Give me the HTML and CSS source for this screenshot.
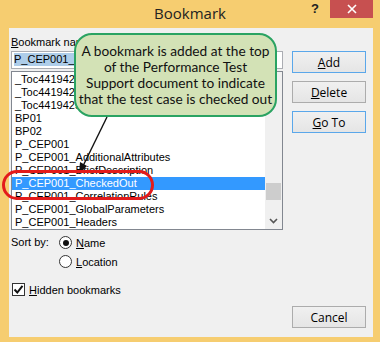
FILE: index.html
```html
<!DOCTYPE html>
<html lang="en">
<head>
  <meta charset="UTF-8">
  <title>Bookmark</title>
  <link rel="stylesheet" href="styles.css">
</head>
<body>
  <div class="window">
    <div class="titlebar">
      <span></span>
      <div class="title">Bookmark</div>
      <div class="controls">
        <span class="help">?</span>
        <span class="close">
          <svg width="10" height="10" viewBox="0 0 10 10"><path d="M1 1 L9 9 M9 1 L1 9" stroke="#fff" stroke-width="1.6"/></svg>
        </span>
      </div>
    </div>

    <div class="client">
      <div class="main">
        <label class="field-label"><u>B</u>ookmark name:</label>
        <div class="name-input"><span class="sel">P_CEP001_CheckedOut</span></div>
        <div class="list">
          <ul class="items">
            <li>_Toc441942547</li>
            <li>_Toc441942548</li>
            <li>_Toc441942549</li>
            <li>BP01</li>
            <li>BP02</li>
            <li>P_CEP001</li>
            <li>P_CEP001_AdditionalAttributes</li>
            <li>P_CEP001_BriefDescription</li>
            <li class="selected">P_CEP001_CheckedOut</li>
            <li>P_CEP001_CorrelationRules</li>
            <li>P_CEP001_GlobalParameters</li>
            <li>P_CEP001_Headers</li>
          </ul>
          <div class="scrollbar">
            <div class="thumb"></div>
            <div class="down">
              <svg width="9" height="6" viewBox="0 0 9 6"><path d="M1 1 L4.5 4.5 L8 1" fill="none" stroke="#555" stroke-width="1.6"/></svg>
            </div>
          </div>
        </div>

        <div class="sort">
          <span class="sort-label">Sort by:</span>
          <div class="radios">
            <div class="radio"><span class="circle checked"></span><u>N</u>ame</div>
            <div class="radio"><span class="circle"></span><u>L</u>ocation</div>
          </div>
        </div>

        <div class="check">
          <span class="box">
            <svg width="11" height="11" viewBox="0 0 11 11"><path d="M1.5 5.5 L4.3 8.5 L9.5 1.8" fill="none" stroke="#111" stroke-width="2"/></svg>
          </span>
          <u>H</u>idden bookmarks
        </div>
      </div>

      <div class="buttons">
        <button class="btn default"><u>A</u>dd</button>
        <button class="btn"><u>D</u>elete</button>
        <button class="btn default"><u>G</u>o To</button>
        <button class="btn cancel">Cancel</button>
      </div>
    </div>

    <!-- annotation layered over the dialog -->
    <div class="callout">A bookmark is added at the top<br>of the Performance Test<br>Support document to indicate<br>that the test case is checked out</div>
    <svg class="pointer" width="380" height="342" viewBox="0 0 380 342">
      <line x1="107" y1="117" x2="83" y2="166" stroke="#111" stroke-width="1.4"/>
      <polygon points="79,174 80,162 87,166" fill="#111"/>
    </svg>
    <div class="ring"></div>
  </div>
</body>
</html>
```

FILE: styles.css
```css
body {
  margin: 0;
}
.window {
  position: relative;
  width: 380px;
  height: 342px;
  background-color: #f6cd70;
  display: flex;
  flex-direction: column;
  font-family: "Liberation Sans", Arial, sans-serif;
  font-size: 11px;
  color: #000;
}
.titlebar {
  height: 28px;
  display: grid;
  grid-template-columns: 1fr auto 1fr;
}
.title {
  font-family: "Open Sans", sans-serif;
  font-size: 15px;
  line-height: 26px;
  color: #222;
}
.controls {
  justify-self: end;
  display: flex;
  align-items: flex-start;
}
.help {
  font-weight: bold;
  font-size: 13px;
  line-height: 15px;
  margin: 1px 11px 0 0;
  color: #222;
}
.close {
  width: 43px;
  height: 18px;
  margin-right: 7px;
  background-color: #c75050;
  display: flex;
  align-items: center;
  justify-content: center;
}
.client {
  flex: 1;
  margin: 0 7px 5px 9px;
  padding: 8px 0 9px 2px;
  background-color: #f0f0f0;
  display: grid;
  grid-template-columns: 272px 74px;
  column-gap: 9px;
}
.main {
  display: flex;
  flex-direction: column;
}
.field-label {
  line-height: 13px;
  margin-bottom: 2px;
}
.name-input {
  box-sizing: border-box;
  height: 18px;
  border: 1px solid #abadb3;
  background-color: #fff;
  padding: 1px 2px;
}
.sel {
  display: inline-block;
  line-height: 13px;
  background-color: #aecde9;
}
.list {
  box-sizing: border-box;
  height: 159px;
  margin-top: 2px;
  border: 1px solid #828790;
  background-color: #fff;
  display: flex;
}
.items {
  flex: 1;
  list-style: none;
  margin: 0;
  padding: 1px 0 0 0;
}
.items li {
  height: 13px;
  line-height: 13px;
  padding-left: 3px;
  white-space: nowrap;
}
.items li.selected {
  background-color: #3399ff;
  color: #fff;
}
.scrollbar {
  width: 17px;
  background-color: #f0f0f0;
  display: flex;
  flex-direction: column;
  justify-content: flex-end;
  align-items: center;
}
.thumb {
  width: 15px;
  height: 17px;
  margin-bottom: 12px;
  background-color: #cdcdcd;
}
.down {
  height: 17px;
  display: flex;
  align-items: center;
}
.sort {
  display: grid;
  grid-template-columns: 48px auto;
  margin-top: 3px;
}
.sort-label {
  line-height: 19px;
}
.radio {
  height: 19px;
  display: flex;
  align-items: center;
}
.circle {
  box-sizing: border-box;
  width: 13px;
  height: 13px;
  margin-right: 4px;
  border: 1px solid #333;
  border-radius: 50%;
  background-color: #fff;
  display: flex;
  align-items: center;
  justify-content: center;
}
.circle.checked::after {
  content: "";
  width: 6px;
  height: 6px;
  border-radius: 50%;
  background-color: #111;
}
.check {
  height: 15px;
  margin-top: 11px;
  display: flex;
  align-items: center;
}
.box {
  box-sizing: border-box;
  width: 13px;
  height: 13px;
  margin: 0 4px 0 1px;
  border: 1px solid #333;
  background-color: #fff;
  display: flex;
  align-items: center;
  justify-content: center;
}
.buttons {
  display: flex;
  flex-direction: column;
  gap: 8px;
  padding-top: 15px;
}
.btn {
  box-sizing: border-box;
  width: 74px;
  height: 22px;
  padding: 0;
  border: 1px solid #acacac;
  background: linear-gradient(#f0f0f0, #e5e5e5);
  font-family: "Open Sans", sans-serif;
  font-size: 12px;
  color: #000;
}
.btn.default {
  border-color: #5aa7ea;
}
.btn.cancel {
  margin-top: auto;
}
.callout {
  position: absolute;
  left: 74px;
  top: 33px;
  box-sizing: border-box;
  width: 203px;
  height: 84px;
  padding-top: 8px;
  border: 2px solid #2aa362;
  border-radius: 18px;
  background-color: #d3e2b6;
  font-family: Lato, sans-serif;
  font-size: 13.7px;
  line-height: 16px;
  text-align: center;
  white-space: nowrap;
  color: #111;
}
.pointer {
  position: absolute;
  left: 0;
  top: 0;
  pointer-events: none;
}
.ring {
  position: absolute;
  left: 2px;
  top: 170px;
  box-sizing: border-box;
  width: 152px;
  height: 30px;
  border: 3px solid #e31b1b;
  border-radius: 15px;
}
```
